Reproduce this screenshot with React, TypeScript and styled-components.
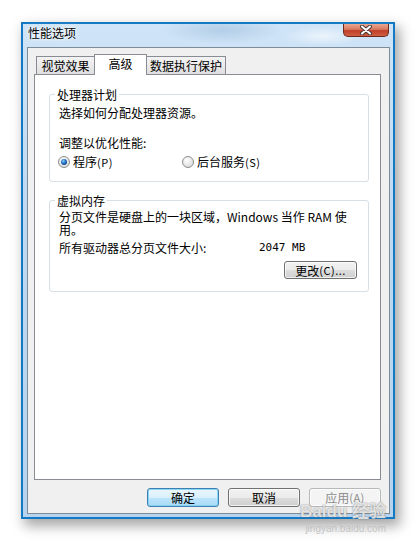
import styled, { createGlobalStyle } from "styled-components"

const Global = createGlobalStyle`
body {
  margin: 0;
  background: #ffffff;
  font-family: "Noto Sans CJK SC", "DejaVu Sans", sans-serif;
  font-size: 12px;
  line-height: 13px;
  color: #000;
}
* { box-sizing: border-box; }
`

const Page = styled.div`
width: 416px;
height: 541px;
position: relative;
overflow: hidden;
padding: 22px 0 0 21px;
`

const Frame = styled.div`
width: 374px;
height: 497px;
display: flex;
flex-direction: column;
border: 2px solid #1479c4;
padding: 0 3px 3px 4px;
background:
  radial-gradient(ellipse 60px 14px at 200px 6px, rgba(150,185,215,0.5), transparent),
  radial-gradient(ellipse 40px 10px at 300px 12px, rgba(255,255,255,0.6), transparent),
  linear-gradient(180deg, #cfe4f7 0%, #bfd9f1 40%, #b7d3ee 100%);
box-shadow: 4px 6px 12px 1px rgba(0,0,0,0.35);
`

const TitleBar = styled.div`
height: 23px;
display: flex;
align-items: flex-start;
`

const Title = styled.div`
padding: 2px 0 0 1px;
font-size: 12px;
line-height: 14px;
text-shadow: 0 0 6px #fff, 0 0 3px #fff;
`

const CloseButton = styled.div`
margin-left: auto;
margin-right: 1px;
width: 46px;
height: 13px;
display: flex;
align-items: center;
justify-content: center;
border: 1px solid #6b2a1c;
border-top: none;
border-radius: 0 0 5px 5px;
background: linear-gradient(180deg, #e9a792 0%, #d7785c 45%, #c0402a 55%, #cf5f42 100%);
`

const Client = styled.div`
flex: 1;
display: flex;
flex-direction: column;
border: 1px solid #7c8c99;
background: #f0f0f0;
padding: 6px 8px 6px 6px;
`

const TabRow = styled.div`
height: 20px;
display: flex;
align-items: flex-end;
padding-left: 2px;
position: relative;
z-index: 1;
`

const Tab = styled.div<{ w: number; active?: boolean }>`
width: ${({ w }) => w}px;
height: ${({ active }) => (active ? 21 : 18)}px;
margin-left: ${({ active }) => (active ? -1 : 0)}px;
margin-right: ${({ active }) => (active ? -1 : 0)}px;
margin-bottom: ${({ active }) => (active ? -1 : 0)}px;
position: relative;
z-index: ${({ active }) => (active ? 2 : 1)};
border: 1px solid #898c95;
border-bottom: none;
background: ${({ active }) =>
  active ? "#ffffff" : "linear-gradient(180deg, #f3f3f3 0%, #ebebeb 50%, #dedede 100%)"};
display: flex;
align-items: center;
justify-content: center;
padding-bottom: ${({ active }) => (active ? 3 : 0)}px;
white-space: nowrap;
`

const Panel = styled.div`
flex: 1;
border: 1px solid #898c95;
background: #ffffff;
padding: 13px 11px 0 14px;
`

const Group = styled.fieldset<{ gap?: number }>`
margin: ${({ gap }) => gap || 0}px 0 0 0;
border: 1px solid #d5dfe5;
border-radius: 3px;
padding: 0 11px 0 9px;
min-width: 0;
`

const Legend = styled.legend`
padding: 0 2px;
margin-left: -4px;
line-height: 13px;
`

const Line = styled.div<{ top: number }>`
margin-top: ${({ top }) => top}px;
line-height: 13px;
white-space: nowrap;
`

const RadioRow = styled.div`
margin-top: 6px;
margin-left: -1px;
margin-bottom: 13px;
display: grid;
grid-template-columns: 124px auto;
height: 13px;
`

const RadioItem = styled.label`
display: flex;
align-items: center;
gap: 3px;
white-space: nowrap;
`

const Small = styled.span`
font-size: 11px;
letter-spacing: 0.5px;
`

const SizeRow = styled.div`
margin-top: 5px;
display: grid;
grid-template-columns: 200px auto;
line-height: 13px;
`

const Mono = styled.span`
font-family: "DejaVu Sans Mono", "Liberation Mono", monospace;
font-size: 11px;
`

const ButtonRight = styled.div`
display: flex;
justify-content: flex-end;
margin-top: 7px;
padding-bottom: 12px;
`

const Button = styled.div<{ w: number; h: number; focused?: boolean; disabled?: boolean }>`
width: ${({ w }) => w}px;
height: ${({ h }) => h}px;
display: flex;
align-items: center;
justify-content: center;
border-radius: 3px;
border: 1px solid ${({ focused, disabled }) => (focused ? "#3c7fb1" : disabled ? "#b5b9bc" : "#707070")};
color: ${({ disabled }) => (disabled ? "#8d8d8d" : "#000")};
background: ${({ focused, disabled }) =>
  disabled
    ? "#f4f4f4"
    : focused
    ? "linear-gradient(180deg, #eaf6fd 0%, #d9f0fc 50%, #bee6fd 51%, #a7d9f5 100%)"
    : "linear-gradient(180deg, #f2f2f2 0%, #ebebeb 50%, #dddddd 51%, #cfcfcf 100%)"};
box-shadow: inset 0 0 0 1px ${({ focused }) => (focused ? "rgba(130,210,245,0.9)" : "rgba(255,255,255,0.7)")};
white-space: nowrap;
`

const Footer = styled.div`
display: flex;
justify-content: flex-end;
gap: 9px;
margin-top: 8px;
`

const Watermark = styled.div`
position: absolute;
right: 30px;
bottom: 6px;
display: flex;
flex-direction: column;
align-items: flex-end;
pointer-events: none;
`

const WaterLogo = styled.div`
font-family: "Liberation Sans", "Noto Sans CJK SC", sans-serif;
font-weight: bold;
font-size: 17px;
line-height: 18px;
color: rgba(255,255,255,0.75);
text-shadow: 0 0 1px rgba(120,120,120,0.8), 0 0 2px rgba(120,120,120,0.5);
`

const WaterUrl = styled.div`
font-family: "Liberation Sans", sans-serif;
font-size: 10px;
line-height: 12px;
color: rgba(190,190,190,0.9);
margin-top: 2px;
`

const Radio = ({ checked }: { checked?: boolean }) => (
  <svg width="12" height="12" viewBox="0 0 12 12">
    <defs>
      <radialGradient id="rb" cx="0.4" cy="0.35" r="0.7">
        <stop offset="0" stopColor="#ffffff" />
        <stop offset="1" stopColor="#d8d8d8" />
      </radialGradient>
      <radialGradient id="rd" cx="0.4" cy="0.35" r="0.7">
        <stop offset="0" stopColor="#8fd0f8" />
        <stop offset="0.5" stopColor="#2b78c8" />
        <stop offset="1" stopColor="#0c3f86" />
      </radialGradient>
    </defs>
    <circle cx="6" cy="6" r="5.5" fill="url(#rb)" stroke="#8e8f8f" />
    {checked && <circle cx="6" cy="6" r="3" fill="url(#rd)" />}
  </svg>
)

const CloseX = () => (
  <svg width="14" height="10" viewBox="0 0 14 10">
    <path d="M3 1.5 L11 8.5 M11 1.5 L3 8.5" stroke="#4a3a36" strokeWidth="4" strokeLinecap="round" />
    <path d="M3 1.5 L11 8.5 M11 1.5 L3 8.5" stroke="#ffffff" strokeWidth="2" strokeLinecap="round" />
  </svg>
)

const App = () => {
  return (
    <>
      <Global />
      <Page>
        <Frame>
          <TitleBar>
            <Title>性能选项</Title>
            <CloseButton>
              <CloseX />
            </CloseButton>
          </TitleBar>
          <Client>
            <TabRow>
              <Tab w={59}>视觉效果</Tab>
              <Tab w={53} active>高级</Tab>
              <Tab w={80}>数据执行保护</Tab>
            </TabRow>
            <Panel>
              <Group>
                <Legend>处理器计划</Legend>
                <Line top={5}>选择如何分配处理器资源。</Line>
                <Line top={17}>调整以优化性能:</Line>
                <RadioRow>
                  <RadioItem>
                    <Radio checked />
                    <span>程序<Small>(P)</Small></span>
                  </RadioItem>
                  <RadioItem>
                    <Radio />
                    <span>后台服务<Small>(S)</Small></span>
                  </RadioItem>
                </RadioRow>
              </Group>
              <Group gap={12}>
                <Legend>虚拟内存</Legend>
                <Line top={3}>分页文件是硬盘上的一块区域，Windows 当作 RAM 使</Line>
                <Line top={0}>用。</Line>
                <SizeRow>
                  <span>所有驱动器总分页文件大小:</span>
                  <Mono>2047 MB</Mono>
                </SizeRow>
                <ButtonRight>
                  <Button w={73} h={18}>更改<Small>(C)...</Small></Button>
                </ButtonRight>
              </Group>
            </Panel>
            <Footer>
              <Button w={72} h={19} focused>确定</Button>
              <Button w={72} h={19}>取消</Button>
              <Button w={72} h={19} disabled>应用<Small>(A)</Small></Button>
            </Footer>
          </Client>
        </Frame>
        <Watermark>
          <WaterLogo>Baidu 经验</WaterLogo>
          <WaterUrl>jingyan.baidu.com</WaterUrl>
        </Watermark>
      </Page>
    </>
  )
}

export default App
